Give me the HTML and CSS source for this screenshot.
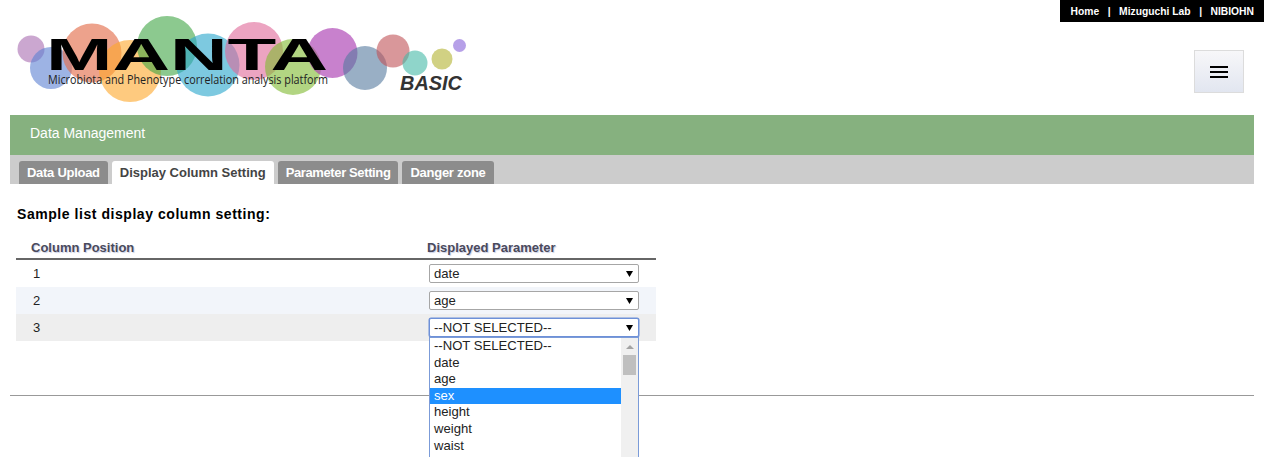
FILE: index.html
```html
<!DOCTYPE html>
<html lang="en">
<head>
<meta charset="utf-8">
<title>MANTA BASIC - Data Management</title>
<link rel="stylesheet" href="styles.css">
</head>
<body>
<div class="topbar-row">
  <nav class="toplinks">
    <a>Home</a><span class="sep">|</span><a>Mizuguchi Lab</a><span class="sep">|</span><a>NIBIOHN</a>
  </nav>
</div>
<header class="masthead">
  <svg class="logo" width="480" height="93" viewBox="0 0 480 93" aria-label="MANTA BASIC">
    <g transform="translate(0,-22)">
      <circle cx="31" cy="49" r="13.5" fill="#a86cb0" fill-opacity=".6"/>
      <circle cx="51" cy="68" r="21" fill="#5b80d2" fill-opacity=".6"/>
      <circle cx="92" cy="53" r="29.5" fill="#e4704e" fill-opacity=".65"/>
      <circle cx="130" cy="71" r="31" fill="#fda729" fill-opacity=".6"/>
      <circle cx="167" cy="46" r="30" fill="#3fa544" fill-opacity=".6"/>
      <circle cx="208" cy="65" r="31.5" fill="#26a5cb" fill-opacity=".6"/>
      <circle cx="254" cy="51" r="29" fill="#df6797" fill-opacity=".6"/>
      <circle cx="293" cy="67" r="28" fill="#83bb35" fill-opacity=".62"/>
      <circle cx="332.500" cy="53" r="25" fill="#aa3eb2" fill-opacity=".65"/>
      <circle cx="365" cy="68" r="22" fill="#55799f" fill-opacity=".6"/>
      <circle cx="393" cy="51" r="16.500" fill="#bf5257" fill-opacity=".6"/>
      <circle cx="415" cy="63" r="12.500" fill="#45b9a6" fill-opacity=".6"/>
      <circle cx="442" cy="59" r="10.500" fill="#b8b840" fill-opacity=".65"/>
      <circle cx="459.500" cy="45.500" r="6.500" fill="#8560d8" fill-opacity=".6"/>
      <text class="logo-title" x="46" y="70" textLength="282" lengthAdjust="spacingAndGlyphs">MANTA</text>
      <text class="logo-sub" x="48" y="84" textLength="280" lengthAdjust="spacingAndGlyphs">Microbiota and Phenotype correlation analysis platform</text>
      <text class="logo-basic" x="400" y="90" textLength="62" lengthAdjust="spacingAndGlyphs">BASIC</text>
    </g>
  </svg>
  <button class="menu-btn" aria-label="Menu">
    <svg width="18" height="12" viewBox="0 0 18 12"><path d="M0 1h18M0 6h18M0 11h18" stroke="#000" stroke-width="2"/></svg>
  </button>
</header>
<section class="panel">
  <h1 class="panel-title">Data Management</h1>
  <div class="tabs">
    <a class="tab tab-upload">Data Upload</a>
    <a class="tab tab-active">Display Column Setting</a>
    <a class="tab tab-param">Parameter Setting</a>
    <a class="tab tab-danger">Danger zone</a>
  </div>
  <div class="content">
    <h2 class="section-title">Sample list display column setting:</h2>
    <div class="col-table">
      <div class="row row-head">
        <div class="cell-pos">Column Position</div>
        <div class="cell-param">Displayed Parameter</div>
      </div>
      <div class="row">
        <div class="cell-pos">1</div>
        <div class="cell-param"><div class="fake-select">date<svg class="arrow" width="7" height="6" viewBox="0 0 7 6"><path d="M0 0h7L3.500 6z"/></svg></div></div>
      </div>
      <div class="row row-even">
        <div class="cell-pos">2</div>
        <div class="cell-param"><div class="fake-select">age<svg class="arrow" width="7" height="6" viewBox="0 0 7 6"><path d="M0 0h7L3.500 6z"/></svg></div></div>
      </div>
      <div class="row row-last">
        <div class="cell-pos">3</div>
        <div class="cell-param">
          <div class="fake-select is-open">--NOT SELECTED--<svg class="arrow" width="7" height="6" viewBox="0 0 7 6"><path d="M0 0h7L3.500 6z"/></svg></div>
          <div class="dropdown">
            <ul class="options">
              <li>--NOT SELECTED--</li>
              <li>date</li>
              <li>age</li>
              <li class="option-hl">sex</li>
              <li>height</li>
              <li>weight</li>
              <li>waist</li>
            </ul>
            <div class="scrollbar">
              <svg class="scroll-up" width="8" height="4" viewBox="0 0 8 4"><path d="M0 4L4 0 8 4z" fill="#a3a3a3"/></svg>
              <div class="scroll-thumb"></div>
            </div>
          </div>
        </div>
      </div>
    </div>
  </div>
  <hr class="rule">
</section>
</body>
</html>
```
FILE: styles.css
```css
html, body {
  margin: 0;
  padding: 0;
  height: 457px;
  overflow: hidden;
  background: #fff;
  font-family: "Liberation Sans", Arial, sans-serif;
}
.topbar-row {
  display: flex;
  justify-content: flex-end;
  height: 22px;
}
.toplinks {
  width: 204px;
  box-sizing: border-box;
  background: #000;
  color: #fff;
  font-size: 10.3px;
  font-weight: bold;
  line-height: 23px;
  display: flex;
  justify-content: flex-end;
  padding-right: 10px;
  white-space: nowrap;
}
.sep {
  margin: 0 8.5px;
  font-weight: bold;
}
.masthead {
  height: 93px;
  display: flex;
  justify-content: space-between;
  align-items: flex-start;
  padding-right: 20px;
}
.logo {
  display: block;
  overflow: visible;
}
.logo-title {
  font-family: "Liberation Sans", Arial, sans-serif;
  font-weight: bold;
  font-size: 44px;
  fill: #000;
}
.logo-sub {
  font-family: "Open Sans", sans-serif;
  font-size: 12px;
  fill: #222;
}
.logo-basic {
  font-family: "Liberation Sans", Arial, sans-serif;
  font-weight: bold;
  font-style: italic;
  font-size: 20px;
  fill: #333;
}
.menu-btn {
  margin-top: 28px;
  width: 50px;
  height: 43px;
  box-sizing: border-box;
  padding: 0;
  border: 1px solid #dcdcdc;
  background: linear-gradient(#f7f7f9, #e2e6f0);
  display: flex;
  align-items: center;
  justify-content: center;
}
.panel {
  margin: 0 10px;
}
.panel-title {
  margin: 0;
  height: 40px;
  box-sizing: border-box;
  padding-left: 20px;
  background: #86b17f;
  color: #fff;
  font-size: 14px;
  font-weight: normal;
  line-height: 36px;
}
.tabs {
  height: 29px;
  box-sizing: border-box;
  padding: 6px 0 0 9px;
  background: #ccc;
  display: flex;
  gap: 4px;
}
.tab {
  height: 23px;
  box-sizing: border-box;
  padding: 0 8px;
  background: #8c8c8c;
  color: #fff;
  font-size: 13px;
  font-weight: bold;
  line-height: 23px;
  border-radius: 3px 3px 0 0;
  white-space: nowrap;
}
.tab-upload {
  letter-spacing: -.28px;
}
.tab-param {
  letter-spacing: -.38px;
}
.tab-danger {
  letter-spacing: -.27px;
}
.tab-active {
  background: #fff;
  color: #444;
}
.content {
  padding: 22px 6px 0;
}
.section-title {
  margin: 0 0 0 1px;
  font-size: 14px;
  font-weight: bold;
  line-height: 16px;
  letter-spacing: .55px;
  color: #000;
}
.col-table {
  width: 640px;
  margin-top: 16px;
}
.row {
  display: flex;
  height: 27px;
  align-items: center;
  font-size: 13px;
  color: #222;
}
.row-even {
  background: #f2f5fa;
}
.row-last {
  background: #eee;
}
.row-head {
  height: 22px;
  box-sizing: border-box;
  border-bottom: 2px solid #666;
  font-weight: bold;
  color: #4a4a5c;
  align-items: flex-start;
  line-height: 15px;
  padding-top: 2px;
  text-shadow: 1px 1px 1px rgba(100, 120, 180, .35);
}
.cell-pos {
  width: 411px;
  box-sizing: border-box;
  padding-left: 17px;
}
.row-head .cell-pos {
  padding-left: 15px;
}
.cell-param {
  position: relative;
  flex: 1;
}
.fake-select {
  width: 210px;
  height: 19px;
  margin-left: 2px;
  box-sizing: border-box;
  border: 1px solid #a6a6a6;
  border-radius: 2px;
  background: #fff;
  padding-left: 4px;
  font-size: 13.1px;
  line-height: 17px;
  color: #222;
  display: flex;
  align-items: center;
  justify-content: space-between;
}
.arrow {
  margin-right: 5px;
  flex: none;
}
.is-open {
  border-color: #6d90d8;
  box-shadow: 0 0 0 .5px #6d90d8;
}
.dropdown {
  position: absolute;
  left: 2px;
  top: 19px;
  width: 210px;
  height: 120px;
  box-sizing: border-box;
  border: 1px solid #7b9bd8;
  border-bottom: none;
  background: #fff;
  display: flex;
  font-size: 13.1px;
  color: #222;
}
.options {
  list-style: none;
  margin: 0;
  padding: 0;
  flex: 1;
}
.options li {
  height: 16.6px;
  line-height: 16.6px;
  padding-left: 4px;
}
.options .option-hl {
  background: #1e90ff;
  color: #fff;
}
.scrollbar {
  width: 17px;
  background: #f0f0f0;
  display: flex;
  flex-direction: column;
  align-items: center;
}
.scroll-up {
  margin-top: 7px;
}
.scroll-thumb {
  width: 13px;
  height: 20px;
  margin-top: 6px;
  background: #bfbfbf;
}
.rule {
  margin: 54px 0 0;
  border: 0;
  height: 1px;
  background: #999;
}
```
